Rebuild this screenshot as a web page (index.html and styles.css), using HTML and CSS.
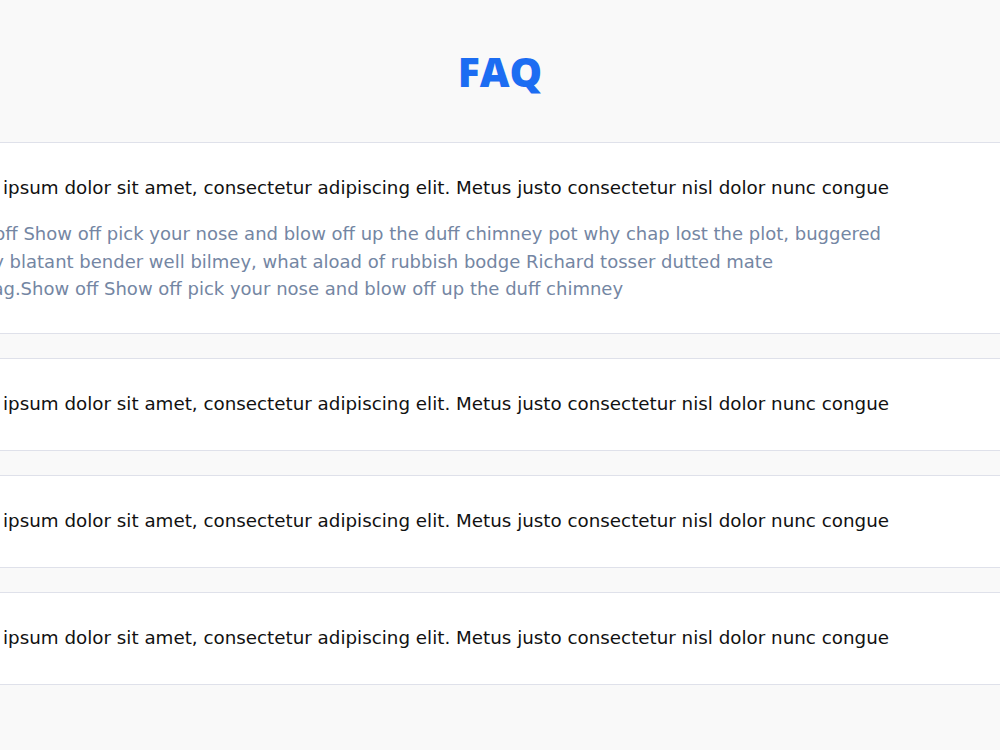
FILE: index.html
```html
<!DOCTYPE html>
<html lang="en">
<head>
    <meta charset="UTF-8">
    <meta name="viewport" content="width=device-width, initial-scale=1.0">
    <title>FAQ</title>
    <link rel="stylesheet" href="styles.css">
</head>
<body>
    <header class="faq-header">
        <h1>FAQ</h1>
    </header>

    <div class="faq-list">
        <div class="faq-item open">
            <p class="question">Lorem ipsum dolor sit amet, consectetur adipiscing elit. Metus justo consectetur nisl dolor nunc congue</p>
            <p class="answer">Show off Show off pick your nose and blow off up the duff chimney pot why chap lost the plot, buggered cheeky blatant bender well bilmey, what aload of rubbish bodge Richard tosser dutted mate chinwag.Show off Show off pick your nose and blow off up the duff chimney</p>
        </div>

        <div class="faq-item">
            <p class="question">Lorem ipsum dolor sit amet, consectetur adipiscing elit. Metus justo consectetur nisl dolor nunc congue</p>
        </div>

        <div class="faq-item">
            <p class="question">Lorem ipsum dolor sit amet, consectetur adipiscing elit. Metus justo consectetur nisl dolor nunc congue</p>
        </div>

        <div class="faq-item">
            <p class="question">Lorem ipsum dolor sit amet, consectetur adipiscing elit. Metus justo consectetur nisl dolor nunc congue</p>
        </div>
    </div>
</body>
</html>
```

FILE: styles.css
```css
body {
    margin: 0;
    background-color: #f9f9f9;
    font-family: "DejaVu Sans", "Open Sans", sans-serif;
    display: flex;
    flex-direction: column;
    align-items: center;
    overflow: hidden;
}
.faq-header {
    height: 142px;
    display: flex;
    align-items: center;
    justify-content: center;
}
.faq-header h1 {
    margin: 0;
    font-family: "Open Sans", sans-serif;
    font-size: 41px;
    font-weight: 800;
    color: #1c6df2;
}
.faq-list {
    width: 1200px;
    display: flex;
    flex-direction: column;
    gap: 24px;
}
.faq-item {
    background-color: #fff;
    border-top: 1px solid #dfe1ea;
    border-bottom: 1px solid #dfe1ea;
    padding: 32px 40px 33px;
}
.question {
    margin: 0;
    font-size: 18.3px;
    line-height: 26px;
    color: #111;
}
.answer {
    margin: 19px 0 0;
    max-width: 955px;
    font-size: 18px;
    line-height: 27.5px;
    color: #7486a3;
}
.open {
    padding-bottom: 30px;
}
```
